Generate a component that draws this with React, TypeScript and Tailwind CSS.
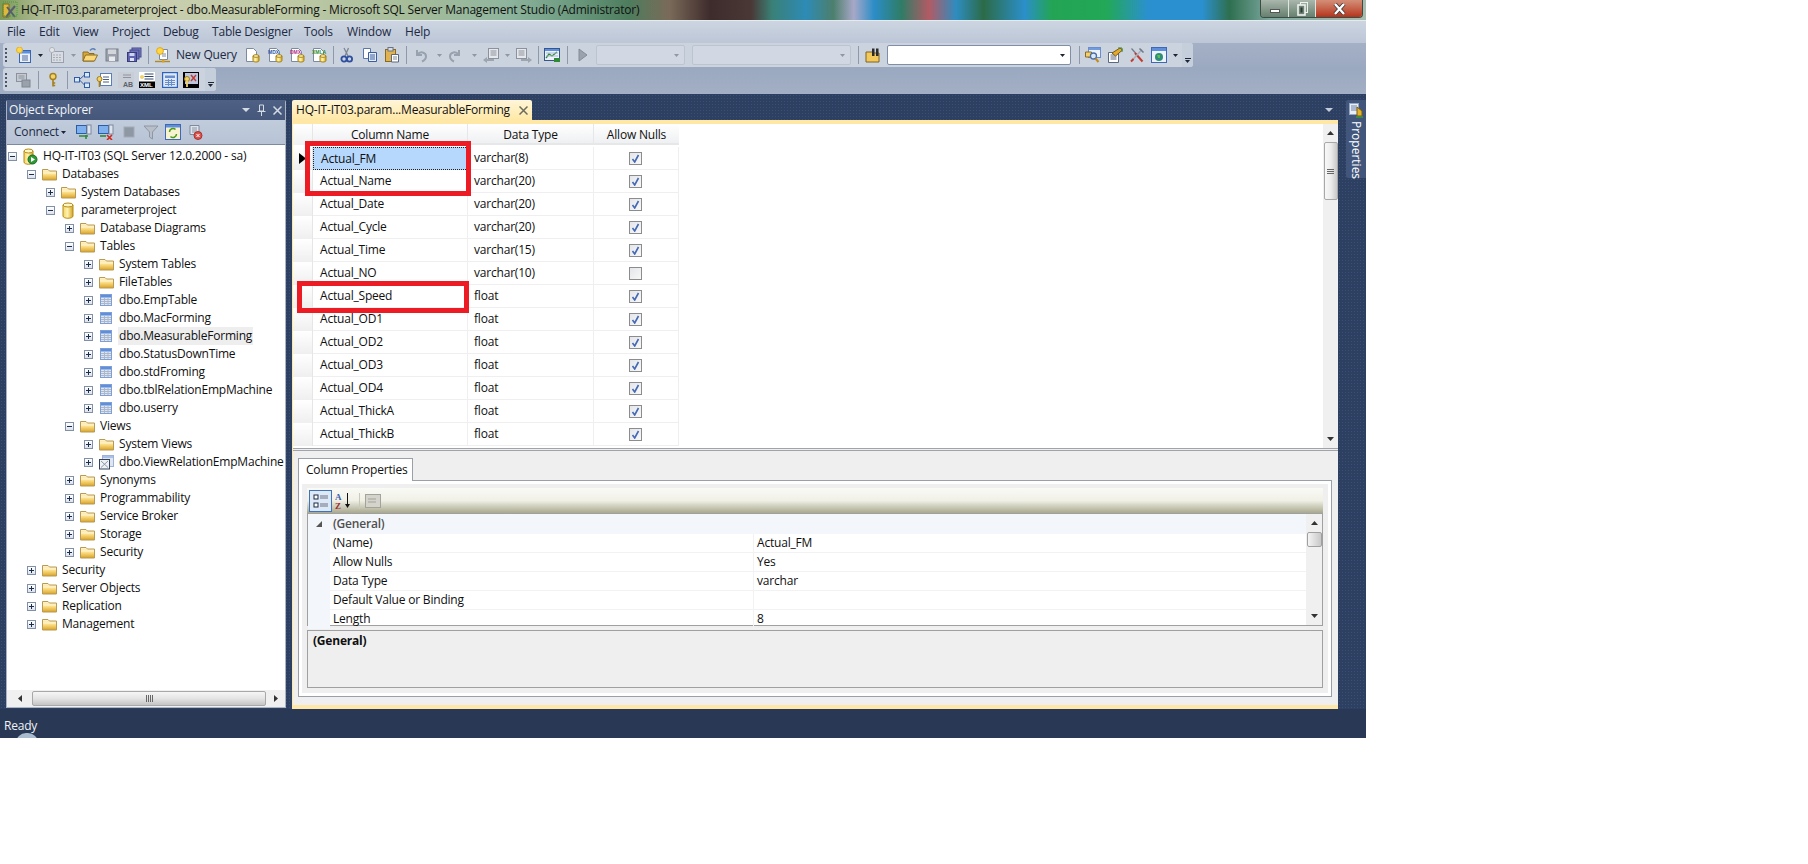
import React from "react";

const F = { fontFamily: '"Open Sans","Noto Sans",sans-serif' };

function S({ w = 16, h = 16, children }: { w?: number; h?: number; children: React.ReactNode }) {
  return (
    <svg width={w} height={h} viewBox={`0 0 ${w} ${h}`} className="block shrink-0">
      {children}
    </svg>
  );
}

function Defs() {
  return (
    <svg width="0" height="0" className="absolute">
      <defs>
        <linearGradient id="fold" x1="0" y1="0" x2="0" y2="1">
          <stop offset="0" stopColor="#fff6cf" />
          <stop offset="0.5" stopColor="#fbdc82" />
          <stop offset="1" stopColor="#d9a227" />
        </linearGradient>
        <linearGradient id="cyl" x1="0" y1="0" x2="1" y2="0">
          <stop offset="0" stopColor="#f6d65f" />
          <stop offset="0.45" stopColor="#fff2b0" />
          <stop offset="1" stopColor="#d4a21c" />
        </linearGradient>
      </defs>
    </svg>
  );
}

const Folder = () => (
  <S w={15} h={14}>
    <path d="M0.5 13V2.5h5.5l1.5 1.5h7V13z" fill="url(#fold)" stroke="#b79a55" />
    <path d="M1 6h13" stroke="#fff8dc" />
  </S>
);

const TableIco = () => (
  <S w={14} h={13}>
    <rect x="1.5" y="0.5" width="11" height="11" fill="#dfe6f2" stroke="#7e9fd6" />
    <rect x="2" y="1" width="10" height="2.5" fill="#5f8fdc" />
    <path d="M2 5.5h10M2 7.5h10M2 9.5h10M5.5 4v7M9 4v7" stroke="#a9b8cf" />
  </S>
);

const ViewIco = () => (
  <S w={15} h={15}>
    <rect x="3.5" y="0.5" width="11" height="11" fill="#dfe6f2" stroke="#9db3d8" />
    <rect x="4" y="1" width="10" height="2" fill="#a9c1e8" />
    <rect x="0.5" y="4.5" width="10" height="9.5" fill="#eef1f5" stroke="#34425c" />
    <path d="M2 6l7 6.5M9 6l-7 6.5" stroke="#8d98aa" />
  </S>
);

const Cyl = () => (
  <S w={14} h={17}>
    <path d="M2 3v11c0 3 10 3 10 0V3z" fill="url(#cyl)" stroke="#b38a1a" />
    <ellipse cx="7" cy="3" rx="5" ry="2" fill="#fff6c0" stroke="#b38a1a" />
  </S>
);

const ServerIco = () => (
  <S w={16} h={17}>
    <path d="M2 3v11c0 3 9 3 9 0V3z" fill="url(#cyl)" stroke="#b38a1a" />
    <ellipse cx="6.5" cy="3" rx="4.5" ry="2" fill="#fff6c0" stroke="#b38a1a" />
    <circle cx="10.5" cy="11.5" r="4.5" fill="#2e9a36" stroke="#1d6a22" />
    <path d="M9 9l4 2.5-4 2.5z" fill="#fff" />
  </S>
);

function Exp({ open = false }: { open?: boolean }) {
  return (
    <div className="w-[9px] h-[9px] border border-[#8090a8] bg-gradient-to-b from-white to-[#dde2ea] relative shrink-0">
      <div className="absolute left-[1px] top-[3px] w-[5px] h-[1px] bg-[#1c2c4c]" />
      {!open && <div className="absolute left-[3px] top-[1px] w-[1px] h-[5px] bg-[#1c2c4c]" />}
    </div>
  );
}

const Tri = ({ dim = false }: { dim?: boolean }) => (
  <S w={5} h={3}>
    <path d="M0 0h5L2.5 3z" fill={dim ? "#8f97a3" : "#1c2535"} />
  </S>
);

const Grip = () => (
  <div className="w-[3px] flex flex-col gap-[2px] items-center shrink-0">
    {[0, 1, 2, 3].map((i) => (
      <div key={i} className="w-[2px] h-[2px] bg-[#4a5568]" />
    ))}
  </div>
);

const Sep = ({ c }: { c: string }) => <div className={`w-[1px] h-[18px] bg-[#8d99ab] shrink-0 ${c}`} />;

const Overflow = () => (
  <div className="w-[11px] self-stretch bg-[#c5cedb] rounded-r-[3px] flex flex-col items-center justify-end pb-[4px] gap-[1px] shrink-0 ml-auto">
    <div className="w-[6px] h-[1px] bg-[#1c2535]" />
    <Tri />
  </div>
);

const I = ({ c, children }: { c: string; children: React.ReactNode }) => <div className={`shrink-0 ${c}`}>{children}</div>;

const Doc = ({ children }: { children?: React.ReactNode }) => (
  <>
    <path d="M2.5 1.5h7l3 3v10h-10z" fill="#fff" stroke="#7c8aa0" />
    {children}
  </>
);
const Bolt = () => (
  <>
    <path d="M9 9v4.5c0 2 6 2 6 0V9z" fill="url(#cyl)" stroke="#a58214" />
    <ellipse cx="12" cy="9" rx="3" ry="1.3" fill="#fff6c0" stroke="#a58214" />
  </>
);
const NewProject = () => (
  <S>
    <rect x="3.5" y="3.5" width="11" height="12" fill="#e9f1fc" stroke="#3a66b0" />
    <rect x="4" y="4" width="10" height="2.5" fill="#5e8fdc" />
    <path d="M6 9h6M6 11h6M6 13h6" stroke="#4c6a9c" />
    <circle cx="3.5" cy="3" r="3" fill="#ffd84a" stroke="#e5b020" />
  </S>
);
const AddItem = () => (
  <S>
    <rect x="2.5" y="4.5" width="12" height="11" fill="#d9dde3" stroke="#9aa1ac" />
    <path d="M4 8h9M4 10.5h9M4 13h9" stroke="#a6acb6" strokeDasharray="2 1" />
    <circle cx="3" cy="3" r="2.6" fill="#e1e3e7" stroke="#b0b5bd" />
  </S>
);
const OpenFolder = () => (
  <S>
    <path d="M1 14V5h5l1 1.5h5V14z" fill="#dba93a" stroke="#8b6c22" />
    <path d="M1 14l2.5-6H15.5L12.5 14z" fill="#fbd97b" stroke="#8b6c22" />
    <path d="M8 3.5c2-2.5 4-2 5.5-.5" fill="none" stroke="#5d7fb5" strokeWidth="1.4" />
  </S>
);
const Save = () => (
  <S>
    <rect x="2" y="2" width="12" height="12" fill="#9aa1ab" stroke="#7a808a" />
    <rect x="4" y="2.5" width="8" height="4.5" fill="#d2d6db" />
    <rect x="5" y="9.5" width="6" height="4.5" fill="#e8eaed" />
  </S>
);
const SaveAll = () => (
  <S>
    <rect x="6" y="1" width="9" height="9" fill="#7f84c8" stroke="#45498a" />
    <rect x="4" y="3" width="9" height="9" fill="#6a70bc" stroke="#45498a" />
    <rect x="1.5" y="5.5" width="9" height="9" fill="#5d63ae" stroke="#373b78" />
    <rect x="3.5" y="6" width="5" height="3" fill="#cfd2f0" />
    <rect x="4" y="11" width="4" height="3" fill="#dfe1f3" />
  </S>
);
const NewQuery = () => (
  <S>
    <path d="M4.5 2.5h8v10h-8z" fill="#fff" stroke="#7c8aa0" />
    <circle cx="5" cy="4" r="3.4" fill="#ffd84a" stroke="#e2a910" />
    <path d="M7 7h4M7 9h4" stroke="#7c8aa0" />
    <path d="M0 14.5h15" stroke="#b48a1c" strokeWidth="1.4" />
    <rect x="7" y="12.5" width="2.4" height="3" fill="#d9a227" />
  </S>
);
const DocDb = () => (
  <S>
    <Doc />
    <Bolt />
  </S>
);
const Lab = ({ t, color }: { t: string; color: string }) => (
  <S>
    <Doc>
      <text x="1" y="7" fontSize="5" fontWeight="700" fill={color} fontFamily="Liberation Sans, sans-serif" letterSpacing="0">
        {t}
      </text>
    </Doc>
    <Bolt />
  </S>
);
const Cut = () => (
  <S>
    <path d="M9.5 1L6 9M5 1l4 8" stroke="#7d8794" strokeWidth="1.3" fill="none" />
    <circle cx="5" cy="12" r="2.6" fill="none" stroke="#2d4fa0" strokeWidth="1.8" />
    <circle cx="10.5" cy="12" r="2.6" fill="none" stroke="#2d4fa0" strokeWidth="1.8" />
  </S>
);
const Copy = () => (
  <S>
    <path d="M1.5 1.5h7v10h-7z" fill="#fff" stroke="#5a77ad" />
    <path d="M6.5 5.5h8v9h-8z" fill="#e8effa" stroke="#3a5c9e" />
    <path d="M8 8h5M8 10h5M8 12h5" stroke="#3a5c9e" />
  </S>
);
const Paste = () => (
  <S>
    <rect x="1.5" y="2.5" width="10" height="12" fill="#e0b350" stroke="#8a6a20" />
    <rect x="4" y="0.5" width="5" height="3.5" fill="#d8dde5" stroke="#6a7384" />
    <path d="M7.5 7.5h7v7.5h-7z" fill="#fff" stroke="#5a6880" />
    <path d="M9 10h4M9 12h4" stroke="#7c8aa0" />
  </S>
);
const Undo = () => (
  <S>
    <path d="M4 3v5h5M4.5 7.5C7 4 13 5 13 9.5c0 2.5-2 4-4 5" fill="none" stroke="#98a1ae" strokeWidth="2" />
  </S>
);
const Redo = () => (
  <S>
    <path d="M12 3v5H7M11.5 7.5C9 4 3 5 3 9.5c0 2.5 2 4 4 5" fill="none" stroke="#98a1ae" strokeWidth="2" />
  </S>
);
const Comment = () => (
  <S>
    <rect x="5.5" y="1.5" width="10" height="10" fill="#e6e8ec" stroke="#8b929d" />
    <path d="M7.5 4h6M7.5 6h6M7.5 8h6" stroke="#8b929d" />
    <path d="M0 13l4-3v2h7v2H4v2z" fill="#9da5b0" />
  </S>
);
const Uncomment = () => (
  <S>
    <rect x="0.5" y="1.5" width="10" height="10" fill="#e6e8ec" stroke="#8b929d" />
    <path d="M2.5 4h6M2.5 6h6M2.5 8h6" stroke="#8b929d" />
    <path d="M16 13l-4-3v2H5v2h7v2z" fill="#9da5b0" />
  </S>
);
const Results = () => (
  <S>
    <rect x="0.5" y="1.5" width="15" height="12" fill="#eef3fb" stroke="#35558e" />
    <rect x="1" y="2" width="14" height="2" fill="#5e8fdc" />
    <path d="M2 11l3-4 3 2 5-4" fill="none" stroke="#2e8a36" strokeWidth="1.4" />
    <path d="M2 6h12M2 9h12" stroke="#a9b8cf" />
    <rect x="10" y="11" width="6" height="4" fill="#2e8a36" />
  </S>
);
const Play = () => (
  <S>
    <path d="M5 2l8 6-8 6z" fill="#9aa2ae" stroke="#848c99" />
  </S>
);
const Binoc = () => (
  <S>
    <path d="M1 15V5h6l1 1h6v9z" fill="#f3c95b" stroke="#7f6420" />
    <path d="M7 1.5h2.5V9H7zM11 1.5h2.5V9H11z" fill="#2b2b2b" />
  </S>
);
const FindIco = () => (
  <S>
    <rect x="3.5" y="0.5" width="12" height="10" fill="#eef3fb" stroke="#6a8ecb" />
    <rect x="4" y="1" width="11" height="2" fill="#6f9be0" />
    <path d="M0.5 5h6v5h-6z" fill="#f3d06a" stroke="#8a6a20" />
    <circle cx="8.5" cy="9" r="3" fill="#dce9f8" stroke="#4a6ea8" strokeWidth="1.3" />
    <path d="M10.5 11.5l3 3.5" stroke="#c58a18" strokeWidth="2" />
  </S>
);
const PropsPen = () => (
  <S>
    <path d="M1.5 5.5h10v10h-10z" fill="#fff" stroke="#5a6880" />
    <path d="M3.5 8h6M3.5 10h6M3.5 12h6" stroke="#5a6880" />
    <path d="M5 6l8-5 2.5 2-7 6z" fill="#e6a92a" stroke="#7a5b14" />
    <path d="M11 1h4v4" fill="none" stroke="#3a8a3a" />
  </S>
);
const Tools = () => (
  <S>
    <path d="M2.5 1.5l4 4.5" stroke="#6f7a8a" strokeWidth="1.2" />
    <path d="M6 6l7.5 8.5" stroke="#c43a30" strokeWidth="2" />
    <path d="M13 2.5L2.5 14" stroke="#a6afbb" strokeWidth="1.6" />
    <path d="M10.5 1.5l4 4" stroke="#6f7a8a" strokeWidth="1.6" />
    <path d="M2 14.5l2.5-2.5" stroke="#c43a30" strokeWidth="2" />
  </S>
);
const Globe = () => (
  <S>
    <rect x="0.5" y="0.5" width="15" height="15" fill="#eef3fb" stroke="#3e68b4" />
    <rect x="1" y="1" width="14" height="3" fill="#5e8fdc" />
    <circle cx="8" cy="10" r="4" fill="#2f8d7b" />
    <path d="M6 8h3v3H7z" fill="#5cc04c" />
  </S>
);

const GreyDoc = () => (
  <S>
    <rect x="0.5" y="1.5" width="10" height="8" fill="#c5cad1" stroke="#8b929d" />
    <path d="M2.5 4h6M2.5 6h6" stroke="#8b929d" />
    <rect x="6" y="8" width="8" height="7" fill="#9aa1ab" stroke="#7f8691" />
  </S>
);
const Key = () => (
  <S>
    <circle cx="8" cy="4.5" r="3" fill="#f1d36a" stroke="#a57f1c" strokeWidth="1.4" />
    <path d="M8 7.5v7M8 11h2.2M8 13.5h2.2" stroke="#a57f1c" strokeWidth="1.6" />
  </S>
);
const Rel = () => (
  <S>
    <rect x="0.5" y="5.5" width="5" height="4.5" fill="#dce9f8" stroke="#2d5ba8" />
    <rect x="10.5" y="0.5" width="5" height="4.5" fill="#dce9f8" stroke="#2d5ba8" />
    <rect x="10.5" y="11" width="5" height="4.5" fill="#dce9f8" stroke="#2d5ba8" />
    <path d="M5.5 7.5L10.5 3M5.5 8L10.5 13" stroke="#2d5ba8" />
  </S>
);
const KeyDoc = () => (
  <S>
    <rect x="4.5" y="1.5" width="11" height="12" fill="#fff" stroke="#5a7fb8" />
    <path d="M7 5h6M7 7.5h6M7 10h6" stroke="#4a5f84" />
    <circle cx="3.5" cy="7" r="2.5" fill="#f1d36a" stroke="#a57f1c" />
    <path d="M3.5 9v6" stroke="#a57f1c" strokeWidth="1.6" />
  </S>
);
const AbIco = () => (
  <S>
    <rect x="0" y="0" width="16" height="16" fill="#c9ced6" />
    <path d="M5 3h8M5 5.5h8" stroke="#8d949f" />
    <text x="5" y="14.5" fontSize="7" fontWeight="700" fill="#5c636e" fontFamily="Liberation Sans, sans-serif" letterSpacing="0">
      AB
    </text>
  </S>
);
const XmlIco = () => (
  <S>
    <rect x="0" y="0" width="16" height="16" fill="#fff" />
    <path d="M5.5 2h9M5.5 4.5h9M5.5 7h9" stroke="#30466e" />
    <rect x="0" y="9.5" width="16" height="6.5" fill="#000" />
    <text x="1" y="15" fontSize="6" fontWeight="700" fill="#fff" fontFamily="Liberation Sans, sans-serif" letterSpacing="0">
      XML
    </text>
    <circle cx="3" cy="5" r="2" fill="#f1d36a" />
  </S>
);
const GridBlue = () => (
  <S>
    <rect x="0.5" y="0.5" width="15" height="15" fill="#dfe9f8" stroke="#2f63bb" strokeWidth="1.4" />
    <rect x="3" y="3.5" width="10" height="2.5" fill="#6a8ecb" />
    <path d="M3 8.5h10M3 10.5h10M3 12.5h10M6.5 7v7M9.5 7v7" stroke="#6a8ecb" />
  </S>
);
const CheckKey = () => (
  <S>
    <rect x="0" y="0" width="16" height="16" fill="#000" />
    <rect x="2" y="1" width="13" height="11" fill="#b9c6dd" />
    <path d="M8 3l5 6M13 3L8 9" stroke="#c43a30" strokeWidth="1.4" />
    <circle cx="4" cy="7" r="2.5" fill="#f1d36a" stroke="#a57f1c" />
    <path d="M4 9v6" stroke="#f1d36a" strokeWidth="1.8" />
  </S>
);

const menu = [
  ["File", "w-[32px]"],
  ["Edit", "w-[34px]"],
  ["View", "w-[39px]"],
  ["Project", "w-[51px]"],
  ["Debug", "w-[49px]"],
  ["Table Designer", "w-[92px]"],
  ["Tools", "w-[43px]"],
  ["Window", "w-[58px]"],
  ["Help", "w-[40px]"],
];

const Combo = ({ c, white = false }: { c: string; white?: boolean }) => (
  <div
    className={`h-[20px] shrink-0 rounded-[2px] border flex items-center justify-end pr-[5px] ${c} ${
      white ? "bg-white border-[#7f8fa8]" : "bg-[#d1d8e3] border-[#bcc4d0]"
    }`}
  >
    <Tri dim={!white} />
  </div>
);

function Toolbar1() {
  return (
    <div className="ml-[3px] w-[1190px] h-[24px] bg-[#cbd3df] rounded-[3px] flex items-center">
      <I c="ml-[1px]"><Grip /></I>
      <I c="ml-[9px]"><NewProject /></I>
      <I c="ml-[6px]"><Tri /></I>
      <I c="ml-[6px]"><AddItem /></I>
      <I c="ml-[6px]"><Tri dim /></I>
      <I c="ml-[6px]"><OpenFolder /></I>
      <I c="ml-[6px]"><Save /></I>
      <I c="ml-[6px]"><SaveAll /></I>
      <Sep c="ml-[6px]" />
      <I c="ml-[6px]"><NewQuery /></I>
      <div className="ml-[5px] w-[58px] shrink-0 text-[12px] text-[#1c2a44] whitespace-nowrap">New Query</div>
      <I c="ml-[10px]"><DocDb /></I>
      <I c="ml-[7px]"><Lab t="MDX" color="#2d5ba8" /></I>
      <I c="ml-[6px]"><Lab t="DMX" color="#b0308c" /></I>
      <I c="ml-[6px]"><Lab t="XMLA" color="#2e8a36" /></I>
      <Sep c="ml-[6px]" />
      <I c="ml-[5px]"><Cut /></I>
      <I c="ml-[7px]"><Copy /></I>
      <I c="ml-[6px]"><Paste /></I>
      <Sep c="ml-[6px]" />
      <I c="ml-[6px]"><Undo /></I>
      <I c="ml-[8px]"><Tri dim /></I>
      <I c="ml-[5px]"><Redo /></I>
      <I c="ml-[9px]"><Tri dim /></I>
      <I c="ml-[6px]"><Comment /></I>
      <I c="ml-[6px]"><Tri dim /></I>
      <I c="ml-[6px]"><Uncomment /></I>
      <Sep c="ml-[6px]" />
      <I c="ml-[5px]"><Results /></I>
      <Sep c="ml-[7px]" />
      <I c="ml-[6px]"><Play /></I>
      <Combo c="ml-[6px] w-[89px]" />
      <Combo c="ml-[7px] w-[159px]" />
      <Sep c="ml-[7px]" />
      <I c="ml-[6px]"><Binoc /></I>
      <Combo c="ml-[6px] w-[184px]" white />
      <Sep c="ml-[8px]" />
      <I c="ml-[5px]"><FindIco /></I>
      <I c="ml-[6px]"><PropsPen /></I>
      <I c="ml-[6px]"><Tools /></I>
      <I c="ml-[6px]"><Globe /></I>
      <I c="ml-[6px]"><Tri /></I>
      <Overflow />
    </div>
  );
}

function Toolbar2() {
  return (
    <div className="ml-[3px] w-[213px] h-[23px] bg-[#cbd3df] rounded-[3px] flex items-center">
      <I c="ml-[1px]"><Grip /></I>
      <I c="ml-[9px]"><GreyDoc /></I>
      <Sep c="ml-[6px]" />
      <I c="ml-[6px]"><Key /></I>
      <Sep c="ml-[6px]" />
      <I c="ml-[6px]"><Rel /></I>
      <I c="ml-[6px]"><KeyDoc /></I>
      <I c="ml-[6px]"><AbIco /></I>
      <I c="ml-[5px]"><XmlIco /></I>
      <I c="ml-[7px]"><GridBlue /></I>
      <I c="ml-[5px]"><CheckKey /></I>
      <Overflow />
    </div>
  );
}

const tree: [number, string, string, boolean?, boolean?][] = [
  [0, "server", "HQ-IT-IT03 (SQL Server 12.0.2000 - sa)", true],
  [1, "f", "Databases", true],
  [2, "f", "System Databases"],
  [2, "db", "parameterproject", true],
  [3, "f", "Database Diagrams"],
  [3, "f", "Tables", true],
  [4, "f", "System Tables"],
  [4, "f", "FileTables"],
  [4, "t", "dbo.EmpTable"],
  [4, "t", "dbo.MacForming"],
  [4, "t", "dbo.MeasurableForming", false, true],
  [4, "t", "dbo.StatusDownTime"],
  [4, "t", "dbo.stdFroming"],
  [4, "t", "dbo.tblRelationEmpMachine"],
  [4, "t", "dbo.userry"],
  [3, "f", "Views", true],
  [4, "f", "System Views"],
  [4, "v", "dbo.ViewRelationEmpMachine"],
  [3, "f", "Synonyms"],
  [3, "f", "Programmability"],
  [3, "f", "Service Broker"],
  [3, "f", "Storage"],
  [3, "f", "Security"],
  [1, "f", "Security"],
  [1, "f", "Server Objects"],
  [1, "f", "Replication"],
  [1, "f", "Management"],
];

const indent = ["pl-[1px]", "pl-[20px]", "pl-[39px]", "pl-[58px]", "pl-[77px]"];

function Tree() {
  return (
    <div className="flex-1 bg-white pt-[2px] overflow-hidden">
      {tree.map(([lvl, kind, label, open, sel], i) => (
        <div key={i} className={`h-[18px] flex items-center whitespace-nowrap ${indent[lvl]}`}>
          <Exp open={open} />
          <div className="w-[18px] ml-[4px] flex justify-center shrink-0">
            {kind === "f" && <Folder />}
            {kind === "t" && <TableIco />}
            {kind === "v" && <ViewIco />}
            {kind === "db" && <Cyl />}
            {kind === "server" && <ServerIco />}
          </div>
          <span className={`ml-[3px] px-[1px] text-[12px] text-[#101010] leading-[18px] ${sel ? "bg-[#eeeeee]" : ""}`}>
            {label}
          </span>
        </div>
      ))}
    </div>
  );
}

function HScroll() {
  return (
    <div className="h-[17px] bg-[#f0f0f0] flex items-center shrink-0">
      <div className="w-[25px] flex justify-center">
        <S w={4} h={7}><path d="M4 0v7L0 3.5z" fill="#333" /></S>
      </div>
      <div className="w-[234px] h-[15px] border border-[#a8a8a8] rounded-[2px] bg-gradient-to-b from-[#f6f6f6] via-[#e4e4e4] to-[#c4c4c4] flex items-center justify-center">
        <div className="flex gap-[1px]">
          {[0, 1, 2, 3].map((i) => (
            <div key={i} className="w-[1px] h-[7px] bg-[#666]" />
          ))}
        </div>
      </div>
      <div className="flex-1 flex justify-center">
        <S w={4} h={7}><path d="M0 0v7l4-3.5z" fill="#333" /></S>
      </div>
    </div>
  );
}

function ObjectExplorer() {
  return (
    <div className="w-[280px] ml-[6px] mt-[6px] h-[608px] flex flex-col shrink-0 border-x border-b border-[#aab4c4] rounded-t-[2px]">
      <div className="h-[20px] bg-gradient-to-b from-[#4f6285] to-[#45587c] flex items-center pl-[2px] pr-[3px] text-[12px] text-[#f2f4f8] shrink-0">
        <span>Object Explorer</span>
        <div className="ml-auto flex items-center gap-[7px]">
          <S w={8} h={4}><path d="M0 0h8L4 4z" fill="#d5dbe5" /></S>
          <S w={9} h={12}><path d="M2.5 1h4v6h-4zM0.5 7.5h8M4.5 8v4" fill="none" stroke="#d5dbe5" /></S>
          <S w={9} h={9}><path d="M0.5 0.5l8 8M8.5 0.5l-8 8" stroke="#d5dbe5" strokeWidth="1.5" /></S>
        </div>
      </div>
      <div className="h-[25px] bg-gradient-to-b from-[#c0cbdb] to-[#b8c4d6] flex items-center pl-[7px] text-[12px] text-[#1c2a44] border-b border-[#7c8aa0] shrink-0">
        <span className="w-[44px] shrink-0 whitespace-nowrap">Connect</span>
        <I c="ml-[3px]"><Tri /></I>
        <I c="ml-[10px]">
          <S>
            <rect x="0.5" y="1.5" width="10" height="8" fill="#7fb0ee" stroke="#2d5ba8" />
            <rect x="11" y="1" width="4" height="9" fill="#dfe4ec" stroke="#7c8aa0" />
            <path d="M3 12h9M10 15V11" stroke="#2e8a36" strokeWidth="1.6" />
          </S>
        </I>
        <I c="ml-[6px]">
          <S>
            <rect x="0.5" y="1.5" width="10" height="8" fill="#7fb0ee" stroke="#2d5ba8" />
            <rect x="11" y="1" width="4" height="9" fill="#dfe4ec" stroke="#7c8aa0" />
            <path d="M9 11l5 5M14 11l-5 5" stroke="#d0281c" strokeWidth="1.6" />
            <path d="M2 12h6" stroke="#2e8a36" strokeWidth="1.6" />
          </S>
        </I>
        <I c="ml-[7px]">
          <S><rect x="3" y="3" width="10" height="10" fill="#8e97a4" stroke="#a3abb6" /></S>
        </I>
        <I c="ml-[6px]">
          <S><path d="M1 2h14l-5.5 6v7l-3-2V8z" fill="#b9bfc9" stroke="#8e97a4" /></S>
        </I>
        <I c="ml-[6px]">
          <S>
            <rect x="0.5" y="0.5" width="15" height="15" fill="#f7f2d0" stroke="#3e68b4" />
            <rect x="1" y="1" width="14" height="2.5" fill="#5e8fdc" />
            <path d="M4.5 8a3.5 3.5 0 0 1 6-2.5M11.5 10a3.5 3.5 0 0 1-6 2.5" fill="none" stroke="#4c9a1c" strokeWidth="1.5" />
          </S>
        </I>
        <I c="ml-[6px]">
          <S>
            <path d="M3 1.5h9v9H3z" fill="#dfe4ec" stroke="#7c8aa0" />
            <path d="M5 4h5M5 6h5M5 8h5" stroke="#8a94a4" />
            <circle cx="11" cy="11.5" r="4" fill="#d9534f" stroke="#a8322d" />
            <path d="M9.5 10l3 3M12.5 10l-3 3" stroke="#fff" />
          </S>
        </I>
      </div>
      <Tree />
      <HScroll />
    </div>
  );
}

const rows: [string, string, boolean][] = [
  ["Actual_FM", "varchar(8)", true],
  ["Actual_Name", "varchar(20)", true],
  ["Actual_Date", "varchar(20)", true],
  ["Actual_Cycle", "varchar(20)", true],
  ["Actual_Time", "varchar(15)", true],
  ["Actual_NO", "varchar(10)", false],
  ["Actual_Speed", "float", true],
  ["Actual_OD1", "float", true],
  ["Actual_OD2", "float", true],
  ["Actual_OD3", "float", true],
  ["Actual_OD4", "float", true],
  ["Actual_ThickA", "float", true],
  ["Actual_ThickB", "float", true],
];

const Check = ({ on }: { on: boolean }) => (
  <div className="w-[13px] h-[13px] border border-[#8c8c8c] bg-gradient-to-br from-[#e4e6ea] to-[#f8f8f8] flex items-center justify-center">
    {on && (
      <S w={9} h={9}>
        <path d="M1.5 5l2.2 3L7.5 1" fill="none" stroke="#4468b4" strokeWidth="1.6" />
      </S>
    )}
  </div>
);

function Grid() {
  return (
    <div className="relative flex-1 min-w-0 overflow-hidden bg-white">
      <div className="h-[21px] flex text-[12px] text-[#101010] leading-[21px] text-center border-b-0">
        <div className="w-[20px] shrink-0 bg-gradient-to-b from-white to-[#f0f1f2] border-r border-[#e6e6e6]" />
        <div className="w-[155px] shrink-0 bg-gradient-to-b from-white to-[#eff0f2] border-r border-b-2 border-[#e6e7e9]">Column Name</div>
        <div className="w-[126px] shrink-0 bg-gradient-to-b from-white to-[#eff0f2] border-r border-b-2 border-[#e6e7e9]">Data Type</div>
        <div className="w-[85px] shrink-0 bg-gradient-to-b from-white to-[#eff0f2] border-b-2 border-[#e6e7e9]">Allow Nulls</div>
      </div>
      <div className="pt-[2px]">
        {rows.map(([n, t, c], i) => (
          <div key={n} className="h-[23px] flex text-[12px] text-[#101010] items-stretch">
            <div className="w-[20px] shrink-0 bg-gradient-to-b from-white to-[#efefef] border-r border-[#e6e6e6] flex items-center justify-end pr-[6px]">
              {i === 0 && (
                <S w={7} h={11}><path d="M0 0l7 5.5L0 11z" fill="#000" /></S>
              )}
            </div>
            <div
              className={`w-[155px] shrink-0 pl-[7px] flex items-center border-r border-b ${
                i === 0 ? "bg-[#b6d8fd] border border-dotted border-[#222]" : "border-[#efefef]"
              }`}
            >
              {n}
            </div>
            <div className="w-[126px] shrink-0 pl-[6px] flex items-center border-r border-b border-[#efefef]">{t}</div>
            <div className="w-[85px] shrink-0 flex items-center justify-center pr-[1px] border-r border-b border-[#efefef]">
              <Check on={c} />
            </div>
          </div>
        ))}
      </div>
      <div className="absolute left-[12px] top-[17px] w-[166px] h-[55px] border-[5px] border-[#ed1c24]" />
      <div className="absolute left-[4px] top-[157px] w-[172px] h-[32px] border-[5px] border-[#ed1c24]" />
    </div>
  );
}

function VScroll() {
  return (
    <div className="w-[15px] bg-[#f0f0f0] flex flex-col items-center shrink-0">
      <div className="h-[18px] flex items-center justify-center">
        <S w={7} h={4}><path d="M0 4h7L3.5 0z" fill="#333" /></S>
      </div>
      <div className="w-[14px] h-[58px] border border-[#a8a8a8] rounded-[2px] bg-gradient-to-r from-[#f8f8f8] via-[#ececec] to-[#c8c8c8] flex flex-col items-center justify-center gap-[1px]">
        {[0, 1, 2].map((i) => (
          <div key={i} className="w-[7px] h-[1px] bg-[#666]" />
        ))}
      </div>
      <div className="mt-auto h-[18px] flex items-center justify-center">
        <S w={7} h={4}><path d="M0 0h7L3.5 4z" fill="#333" /></S>
      </div>
    </div>
  );
}

const propsRows: [string, string][] = [
  ["(Name)", "Actual_FM"],
  ["Allow Nulls", "Yes"],
  ["Data Type", "varchar"],
  ["Default Value or Binding", ""],
  ["Length", "8"],
];

function ColumnProps() {
  return (
    <div className="flex-1 bg-[#efefef] min-h-0 pl-[5px] pr-[6px] pt-[7px] pb-[8px] flex flex-col">
      <div className="w-[115px] h-[23px] bg-white border-x border-t border-[#9aa0a8] text-[12px] text-[#101010] pl-[7px] leading-[22px] shrink-0 -mb-[1px] relative z-10 whitespace-nowrap">
        Column Properties
      </div>
      <div className="flex-1 border border-[#9aa0a8] bg-[#efefef] shadow-[inset_0_0_0_3px_#ffffff] p-[8px] pt-[7px] flex flex-col min-h-0">
        <div className="h-[25px] bg-gradient-to-b from-[#fafaf6] via-[#f0f0e6] to-[#a9a98f] flex items-center pl-[2px] shrink-0">
          <div className="w-[23px] h-[22px] border border-[#3f72b8] bg-[#dde8f6] flex items-center justify-center">
            <S>
              <rect x="1" y="2" width="4" height="4" fill="#fff" stroke="#1c2a44" />
              <rect x="1" y="10" width="4" height="4" fill="#fff" stroke="#1c2a44" />
              <path d="M7 3h8M7 5h8M7 11h8M7 13h8" stroke="#6a7384" />
            </S>
          </div>
          <I c="ml-[3px]">
            <S w={18} h={18}>
              <text x="0" y="8" fontSize="9" fontWeight="700" fill="#3a5fb0" fontFamily="Liberation Serif, serif" letterSpacing="0">A</text>
              <text x="0" y="17" fontSize="9" fontWeight="700" fill="#a02c2c" fontFamily="Liberation Serif, serif" letterSpacing="0">Z</text>
              <path d="M12.5 1v13" stroke="#111" />
              <path d="M10 12h5l-2.5 4z" fill="#111" />
            </S>
          </I>
          <div className="ml-[6px] w-[1px] h-[16px] bg-[#c9c9bc]" />
          <I c="ml-[5px]">
            <S>
              <rect x="0.5" y="1.5" width="15" height="13" fill="#d4d4cc" stroke="#a3a39a" />
              <path d="M3 6h8M3 9h8" stroke="#a3a39a" />
            </S>
          </I>
        </div>
        <div className="h-[113px] border border-[#a0a0a0] bg-white flex shrink-0 text-[12px] text-[#101010]">
          <div className="flex-1 min-w-0">
            <div className="h-[20px] bg-[#f3f6fb] flex items-center">
              <div className="w-[22px] flex justify-center shrink-0">
                <S w={6} h={6}><path d="M6 0v6H0z" fill="#555" /></S>
              </div>
              <span className="pl-[3px] text-[#505050] font-semibold">(General)</span>
            </div>
            {propsRows.map(([k, v]) => (
              <div key={k} className="h-[19px] flex">
                <div className="w-[22px] bg-[#f3f6fb] shrink-0" />
                <div className="w-[424px] pl-[3px] border-r border-b border-[#f2f2f2] flex items-center shrink-0">{k}</div>
                <div className="flex-1 pl-[3px] border-b border-[#f2f2f2] flex items-center">{v}</div>
              </div>
            ))}
          </div>
          <div className="w-[16px] bg-[#f0f0f0] flex flex-col items-center shrink-0">
            <div className="h-[18px] flex items-center">
              <S w={7} h={4}><path d="M0 4h7L3.5 0z" fill="#333" /></S>
            </div>
            <div className="w-[15px] h-[15px] border border-[#a0a0a0] rounded-[2px] bg-gradient-to-r from-[#f4f4f4] to-[#c8c8c8]" />
            <div className="mt-auto h-[18px] flex items-center">
              <S w={7} h={4}><path d="M0 0h7L3.5 4z" fill="#333" /></S>
            </div>
          </div>
        </div>
        <div className="mt-[4px] h-[58px] border border-[#a0a0a0] pl-[5px] pt-[1px] text-[12px] font-bold text-[#101010] shrink-0">(General)</div>
      </div>
    </div>
  );
}

function DocArea() {
  return (
    <div className="ml-[6px] mt-[6px] w-[1046px] h-[609px] flex flex-col shrink-0">
      <div className="h-[20px] flex items-stretch shrink-0">
        <div className="w-[240px] bg-gradient-to-b from-[#fff6d8] to-[#ffe8a6] rounded-t-[2px] flex items-center pl-[4px] text-[12px] text-[#101010] whitespace-nowrap">
          <span className="w-[223px] shrink-0">HQ-IT-IT03.param...MeasurableForming</span>
          <S w={9} h={9}><path d="M0.5 0.5l8 8M8.5 0.5l-8 8" stroke="#6c6c5c" strokeWidth="1.5" /></S>
        </div>
        <div className="ml-auto mr-[5px] self-center">
          <S w={8} h={4}><path d="M0 0h8L4 4z" fill="#c3ccda" /></S>
        </div>
      </div>
      <div className="flex-1 bg-[#ffe8a6] pt-[4px] pb-[4px] min-h-0 flex flex-col">
        <div className="h-[324px] flex ml-[1px] shrink-0">
          <Grid />
          <VScroll />
        </div>
        <div className="h-[3px] bg-[#efefef] border-y border-[#a0a4aa] ml-[1px] shrink-0" />
        <div className="flex-1 ml-[1px] min-h-0 flex">
          <ColumnProps />
        </div>
      </div>
    </div>
  );
}

function PropertiesTab() {
  return (
    <div className="ml-[8px] mt-[6px] w-[20px] h-[78px] bg-[#42567c] rounded-l-[2px] flex flex-col items-center pt-[2px] shrink-0">
      <S>
        <rect x="1.5" y="1.5" width="9" height="11" fill="#e9eef6" stroke="#93a6c6" />
        <path d="M3 4h6M3 6h6M3 8h6" stroke="#6c82a8" />
        <path d="M9 5l5 4v5H9z" fill="#e4b32c" stroke="#7a5b14" />
        <path d="M8 15h7" stroke="#3a9a3a" strokeWidth="1.5" />
      </S>
      <div className="[writing-mode:vertical-rl] text-[12px] leading-[20px] tracking-normal text-white mt-[3px] whitespace-nowrap">Properties</div>
    </div>
  );
}

function WinControls() {
  return (
    <div className="ml-auto mr-[3px] w-[103px] h-[18px] flex rounded-b-[4px] border border-t-0 border-[#3c4c44] overflow-hidden shrink-0">
      <div className="w-[28px] bg-gradient-to-b from-[#aab7ac] to-[#66806f] border-r border-[#dfe6e0] flex items-end justify-center pb-[4px]">
        <div className="w-[10px] h-[4px] bg-white border border-[#555]" />
      </div>
      <div className="w-[27px] bg-gradient-to-b from-[#aab7ac] to-[#66806f] border-r border-[#dfe6e0] flex items-center justify-center">
        <S w={11} h={14}>
          <rect x="3.5" y="0.5" width="7" height="10" fill="none" stroke="#eef2ef" />
          <rect x="1" y="3" width="7" height="10" fill="#6d8375" stroke="#eef2ef" strokeWidth="1.6" />
          <rect x="3.5" y="5.5" width="2" height="5" fill="#2c3a33" />
        </S>
      </div>
      <div className="flex-1 bg-gradient-to-b from-[#d38f78] via-[#c6624a] to-[#b3321c] flex items-center justify-center">
        <S w={13} h={12}>
          <path d="M2 1l9 10M11 1l-9 10" stroke="#3a3a3a" strokeWidth="4" />
          <path d="M2 1l9 10M11 1l-9 10" stroke="#fff" strokeWidth="2.4" />
        </S>
      </div>
    </div>
  );
}

export default function App() {
  return (
    <div className="w-[1808px] h-[864px] bg-white overflow-hidden tracking-[-0.2px]" style={F}>
      <Defs />
      <div className="w-[1366px] h-[738px] flex flex-col overflow-hidden">
        <div className="h-[20px] shrink-0 flex items-center text-[12px] text-[#111] bg-[linear-gradient(90deg,#7c9a58_0%,#b0bb93_3%,#c9cfae_12%,#bcc8a4_22%,#a6bd9a_30%,#8fb59e_37%,#6b9a7f_42%,#4d7d5d_46%,#7a6a58_49%,#3e2b2c_52%,#4a3836_55%,#3a8076_56.5%,#2d8bb5_59%,#4c7f6c_61%,#a8a8c8_62.5%,#2b8dc7_64%,#2f7c66_66%,#b35a64_68%,#2e8cc0_70%,#2b6b48_72%,#2b8fc9_75%,#23a455_77%,#22a857_81%,#2b90cf_84%,#2b90cf_88%,#2e6f50_90%,#7ea8a0_93%,#a8bdb0_100%)]">
          <div className="ml-[2px] shrink-0">
            <S w={17} h={18}>
              <path d="M1 3h6v13H1z" fill="#e0b83a" stroke="#8a6a20" />
              <path d="M4 16l9-11M13 16L5 6" stroke="#55606e" strokeWidth="2" />
              <rect x="1" y="1" width="14" height="14" fill="none" stroke="#38a23a" strokeDasharray="1 1" />
            </S>
          </div>
          <span className="ml-[2px] whitespace-nowrap">HQ-IT-IT03.parameterproject - dbo.MeasurableForming - Microsoft SQL Server Management Studio (Administrator)</span>
          <div className="self-start flex-1 flex justify-end">
            <WinControls />
          </div>
        </div>
        <div className="h-[1px] bg-[#e4ebee] shrink-0" />
        <div className="h-[22px] shrink-0 bg-gradient-to-b from-[#cdd5e1] to-[#bcc6d6] flex items-center pl-[7px] text-[12px] text-[#1c2a44]">
          {menu.map(([m, w]) => (
            <div key={m} className={`${w} shrink-0`}>{m}</div>
          ))}
        </div>
        <div className="h-[51px] shrink-0 bg-gradient-to-b from-[#a4b0c6] via-[#9ba9c0] to-[#a2afc5] flex flex-col gap-[1px]">
          <Toolbar1 />
          <Toolbar2 />
        </div>
        <div className="h-[615px] shrink-0 flex items-start bg-[#2e4062] bg-[radial-gradient(circle,#3a4f75_0.8px,transparent_1px)] bg-[length:3px_3px]">
          <ObjectExplorer />
          <DocArea />
          <PropertiesTab />
        </div>
        <div className="flex-1 bg-[#293955] relative overflow-hidden">
          <div className="pl-[4px] pt-[8px] text-[12px] text-[#f0f2f6]">Ready</div>
          <div className="absolute left-[16px] top-[24px] w-[22px] h-[10px] rounded-t-full bg-[#a9bccd]" />
        </div>
      </div>
    </div>
  );
}
